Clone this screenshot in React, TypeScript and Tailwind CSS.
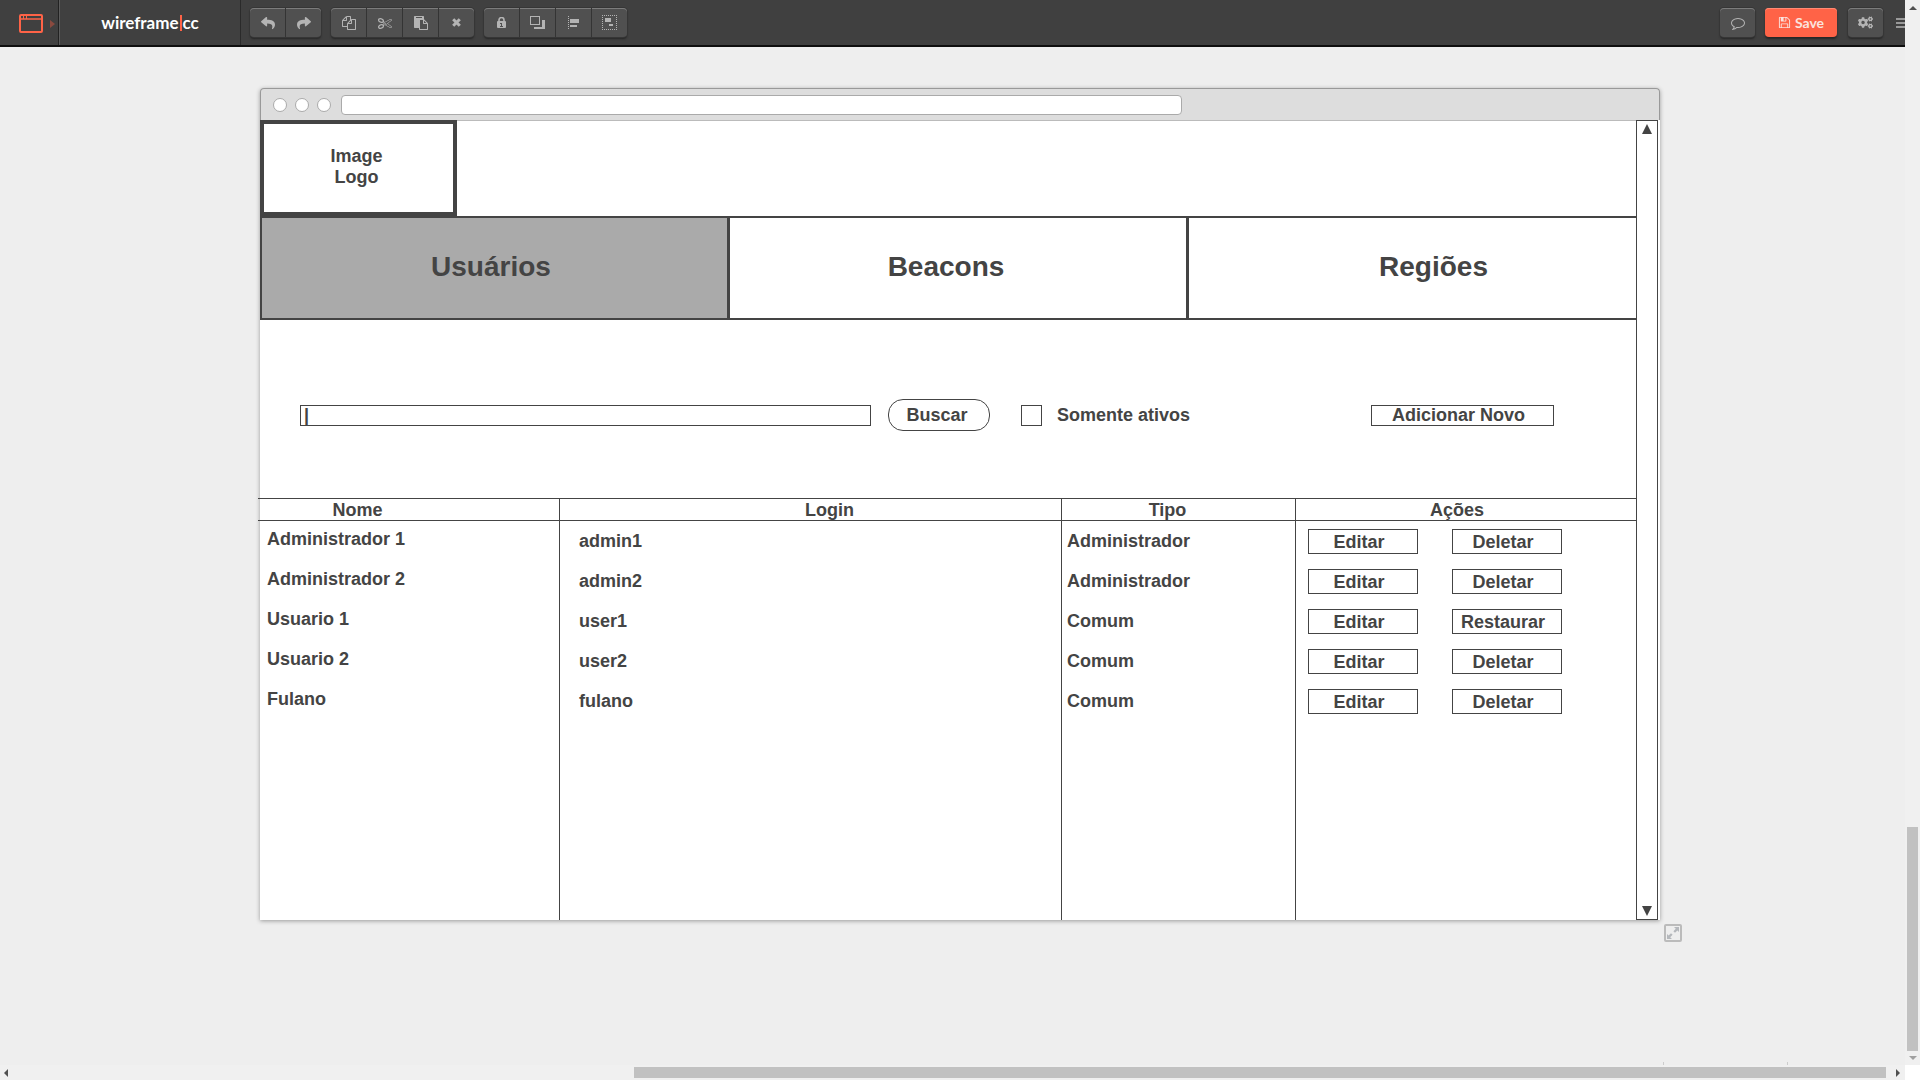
import type { ReactNode } from "react";
import { FaCogs, FaReply, FaShare } from "react-icons/fa";

const PATHS = {
  copy: "M1696 384q40 0 68 28t28 68v1216q0 40-28 68t-68 28h-960q-40 0-68-28t-28-68v-288h-544q-40 0-68-28t-28-68v-672q0-40 20-88t48-76l408-408q28-28 76-48t88-20h416q40 0 68 28t28 68v328q68-40 128-40h416zm-544 213l-299 299h299v-299zm-640-384l-299 299h299v-299zm196 647l316-316v-416h-384v416q0 40-28 68t-68 28h-416v640h512v-256q0-40 20-88t48-76zm956 804v-1152h-384v416q0 40-28 68t-68 28h-416v640h896z",
  cut: "M960 896q26 0 45 19t19 45-19 45-45 19-45-19-19-45 19-45 45-19zm300 64l507 398q28 20 25 56-5 35-35 51l-128 64q-13 7-29 7-17 0-31-8l-690-387-110 66q-8 4-12 5 14 49 10 97-7 77-56 147.500t-132 123.500q-132 84-277 84-136 0-222-78-90-84-79-207 7-76 56-147t131-124q132-84 278-84 83 0 151 31 9-13 22-22l122-73-122-73q-13-9-22-22-68 31-151 31-146 0-278-84-82-53-131-124t-56-147q-5-59 15.500-113t63.500-93q85-79 222-79 145 0 277 84 83 52 132 123t56 148q4 48-10 97 4 1 12 5l110 66 690-387q14-8 31-8 16 0 29 7l128 64q30 16 35 51 3 36-25 56zm-681-260q46-42 21-108t-106-117q-92-59-192-59-74 0-113 36-46 42-21 108t106 117q92 59 192 59 74 0 113-36zm-85 745q81-51 106-117t-21-108q-39-36-113-36-100 0-192 59-81 51-106 117t21 108q39 36 113 36 100 0 192-59zm178-613l96 58v-11q0-36 33-56l14-8-79-44-26 26q-3 3-10 11t-12 12q-2 2-4 3.500t-3 2.500zm224 224l96 32 736-576-128-64-768 431v113l-160 96 9 8q2 2 7 6 4 4 11 12t11 12l26 26zm704 416l128-64-520-408-177 138q-2 3-13 7z",
  paste: "M768 1664h896v-640h-416q-40 0-68-28t-28-68v-416h-384v1152zm256-1440v-64q0-13-9.500-22.500t-22.500-9.500h-704q-13 0-22.500 9.500t-9.500 22.500v64q0 13 9.500 22.500t22.500 9.500h704q13 0 22.500-9.500t9.500-22.500zm256 672h299l-299-299v299zm512 128v672q0 40-28 68t-68 28h-960q-40 0-68-28t-28-68v-160h-544q-40 0-68-28t-28-68v-1344q0-40 28-68t68-28h1088q40 0 68 28t28 68v328q21 13 36 28l408 408q28 28 48 76t20 88z",
  comment: "M896 384q-204 0-381.500 69.500t-282 187.500-104.500 255q0 112 71.500 213.500t201.500 175.500l87 50-27 96q-24 91-70 172 152-63 275-171l43-38 57 6q69 8 130 8 204 0 381.500-69.500t282-187.500 104.500-255-104.500-255-282-187.500-381.500-69.500zm896 512q0 174-120 321.500t-326 233-450 85.500q-70 0-145-8-198 175-460 242-49 14-114 22h-5q-15 0-27-10.500t-16-27.500v-1q-3-4-.500-12t2-10 4.500-9.500l6-9 7-8.500 8-9q7-8 31-34.500t34.500-38 31-39.500 32.500-51 27-59 26-76q-157-89-247.500-220t-90.500-281q0-174 120-321.500t326-233 450-85.500 450 85.500 326 233 120 321.500z",
  save: "M512 1536h768v-384h-768v384zm896 0h128v-896q0-14-10-38.500t-20-34.500l-281-281q-10-10-34-20t-39-10v416q0 40-28 68t-68 28h-576q-40 0-68-28t-28-68v-416h-128v1280h128v-416q0-40 28-68t68-28h832q40 0 68 28t28 68v416zm-384-928v-320q0-13-9.500-22.500t-22.500-9.500h-192q-13 0-22.500 9.500t-9.500 22.500v320q0 13 9.500 22.500t22.500 9.500h192q13 0 22.500-9.500t9.500-22.500zm640 32v928q0 40-28 68t-68 28h-1344q-40 0-68-28t-28-68v-1344q0-40 28-68t68-28h928q40 0 88 20t76 48l280 280q28 28 48 76t20 88z",
};

function Glyph({ d, size }: { d: string; size: number }) {
  return (
    <svg width={size} height={size} viewBox="0 0 1792 1792" fill="currentColor" aria-hidden="true">
      <path d={d} />
    </svg>
  );
}

const CrossIcon = () => (
  <svg width="9" height="9" viewBox="0 0 9 9" aria-hidden="true">
    <path d="M1.200 1.200l6.600 6.600M7.800 1.200L1.200 7.800" stroke="currentColor" strokeWidth="3" />
  </svg>
);

const LockIcon = () => (
  <svg width="9" height="11" viewBox="0 0 9 11" aria-hidden="true">
    <path d="M2 5V3a2.500 2.500 0 0 1 5 0v2" fill="none" stroke="currentColor" strokeWidth="1.600" />
    <rect y="4" width="9" height="7" rx="1" fill="currentColor" />
    <path d="M3 6h2v3h1v1H3V9h1V7H3z" fill="#505050" />
  </svg>
);

const LayersIcon = () => (
  <svg width="15" height="14" viewBox="0 0 15 14" shapeRendering="crispEdges" aria-hidden="true">
    <path d="M12 4h3v9H4v-2h8z" fill="currentColor" />
    <rect x="0.500" y="0.500" width="9" height="8" fill="none" stroke="currentColor" />
  </svg>
);

const AlignIcon = () => (
  <svg width="12" height="14" viewBox="0 0 12 14" shapeRendering="crispEdges" aria-hidden="true">
    <path d="M.500 0v14" stroke="currentColor" strokeDasharray="1 1" />
    <path d="M2 3h9v4H2zM2 9h7v2H2z" fill="currentColor" />
  </svg>
);

const GroupIcon = () => (
  <svg width="15" height="15" viewBox="0 0 15 15" shapeRendering="crispEdges" aria-hidden="true">
    <path d="M0 .500h15M0 14.500h15M.500 0v15M14.500 0v15" stroke="currentColor" strokeDasharray="1 1" />
    <path d="M3 3h6v4H3zM7 9h4v2H7z" fill="currentColor" />
  </svg>
);

type Tool = { label: string; icon: ReactNode };

const TOOL_GROUPS: Tool[][] = [
  [
    { label: "Undo", icon: <FaReply size={14} /> },
    { label: "Redo", icon: <FaShare size={14} /> },
  ],
  [
    { label: "Copy", icon: <Glyph d={PATHS.copy} size={14} /> },
    { label: "Cut", icon: <Glyph d={PATHS.cut} size={14} /> },
    { label: "Paste", icon: <Glyph d={PATHS.paste} size={14} /> },
    { label: "Delete", icon: <CrossIcon /> },
  ],
  [
    { label: "Lock", icon: <LockIcon /> },
    { label: "Arrange", icon: <LayersIcon /> },
    { label: "Align", icon: <AlignIcon /> },
    { label: "Group", icon: <GroupIcon /> },
  ],
];

const RAISED =
  "rounded bg-[#505050] text-[#b4b4b4] shadow-[inset_0_1px_0_#7c7c7c,0_0_0_1px_#363636,0_2px_2px_#262626]";

function ToolGroup({ tools }: { tools: Tool[] }) {
  return (
    <div className={`flex h-[29px] divide-x divide-[#343434] ${RAISED}`}>
      {tools.map((t) => (
        <button key={t.label} type="button" aria-label={t.label} className="flex w-9 items-center justify-center last:w-[35px]">
          {t.icon}
        </button>
      ))}
    </div>
  );
}

function Toolbar() {
  return (
    <header className="col-start-1 flex h-[47px] min-w-0 items-stretch overflow-hidden border-b-2 border-[#0f0f0f] bg-[#404040]">
      <button type="button" aria-label="Stencil" className="flex w-[60px] shrink-0 items-center gap-[7px] border-r border-[#5c5c5c] pl-[19px] pt-[2px] shadow-[inset_-1px_0_0_#222]">
        <svg width="24" height="19" viewBox="0 0 24 19" fill="none" stroke="#ff6347" aria-hidden="true">
          <rect x="1" y="1" width="22" height="17" rx="1" strokeWidth="2" />
          <path d="M1 5h22" strokeWidth="1.500" />
          <path d="M4.500 1v4M7.500 1v4" />
        </svg>
        <svg width="5" height="8" viewBox="0 0 5 8" fill="#8a4a3f" aria-hidden="true">
          <path d="M0 0l5 4-5 4z" />
        </svg>
      </button>
      <a href="#" className="flex w-[181px] shrink-0 items-center justify-center border-r border-[#2a2a2a] font-['Lato',sans-serif] text-[17px] font-bold text-white">
        wireframe<span className="mx-px h-4 w-[2px] bg-[#ff6347]" />cc
      </a>
      <div className="flex shrink-0 gap-[10px] pl-[9px] pt-2">
        {TOOL_GROUPS.map((g) => (
          <ToolGroup key={g[0].label} tools={g} />
        ))}
      </div>
      <div className="ml-auto flex shrink-0 gap-[10px] pt-2">
        <button type="button" aria-label="Comments" className={`flex h-[29px] w-[35px] items-center justify-center ${RAISED}`}>
          <Glyph d={PATHS.comment} size={14} />
        </button>
        <button type="button" className="mr-px flex h-[29px] w-[72px] items-center justify-center gap-1 rounded bg-[#ff6347] font-['Lato',sans-serif] text-sm font-bold text-[#fbe3de] shadow-[inset_0_1px_0_#ff8a74,0_2px_2px_#262626]">
          <Glyph d={PATHS.save} size={13} />
          Save
        </button>
        <button type="button" aria-label="Settings" className={`flex h-[29px] w-[35px] items-center justify-center ${RAISED}`}>
          <FaCogs size={15} />
        </button>
        <button type="button" aria-label="Menu" className="ml-[3px] flex h-[29px] w-[9px] flex-col justify-center gap-[2px]">
          <span className="h-[2px] bg-[#999]" />
          <span className="h-[2px] bg-[#999]" />
          <span className="h-[2px] bg-[#999]" />
        </button>
      </div>
    </header>
  );
}

const TABS = [
  { label: "Usuários", style: "w-[470px] border-x-[3px] border-l-2 bg-[#aaa] pr-[7px]" },
  { label: "Beacons", style: "flex-1 border-r-[3px] pr-6" },
  { label: "Regiões", style: "w-[447px] pl-[42px]" },
];

const ROWS = [
  { name: "Administrador 1", login: "admin1", type: "Administrador", action: "Deletar" },
  { name: "Administrador 2", login: "admin2", type: "Administrador", action: "Deletar" },
  { name: "Usuario 1", login: "user1", type: "Comum", action: "Restaurar" },
  { name: "Usuario 2", login: "user2", type: "Comum", action: "Deletar" },
  { name: "Fulano", login: "fulano", type: "Comum", action: "Deletar" },
];

function RowButton({ children }: { children: ReactNode }) {
  return (
    <button type="button" className="h-[25px] w-[110px] border border-[#444] pr-2 leading-[25px]">
      {children}
    </button>
  );
}

function UsersTable() {
  return (
    <table className="-ml-[2px] w-[calc(100%+2px)] table-fixed border-separate border-spacing-0 text-left">
      <colgroup>
        <col className="w-[302px]" />
        <col />
        <col className="w-[234px]" />
        <col className="w-[340px]" />
      </colgroup>
      <thead>
        <tr className="h-[23px] text-center leading-[19px] [&>th]:border-y [&>th]:border-[#444] [&>th]:pb-0 [&>th]:pt-[2px]">
          <th className="border-r pr-[102px]">Nome</th>
          <th className="border-r pl-[38px]">Login</th>
          <th className="border-r pr-[22px]">Tipo</th>
          <th className="pr-[18px]">Ações</th>
        </tr>
      </thead>
      <tbody className="[&_td]:border-[#444] [&_td]:align-top">
        {ROWS.map((r) => (
          <tr key={r.name} className="h-10 leading-[21px]">
            <td className="border-r pl-[9px] pt-2">{r.name}</td>
            <td className="border-r pl-[19px] pt-[10px]">{r.login}</td>
            <td className="border-r pl-[5px] pt-[10px]">{r.type}</td>
            <td className="pl-3 pt-2">
              <div className="flex gap-[34px]">
                <RowButton>Editar</RowButton>
                <RowButton>{r.action}</RowButton>
              </div>
            </td>
          </tr>
        ))}
        <tr className="h-[199px]" aria-hidden="true">
          <td className="border-r" />
          <td className="border-r" />
          <td className="border-r" />
          <td />
        </tr>
      </tbody>
    </table>
  );
}

function BrowserWindow() {
  return (
    <section className="rounded-t-[4px] shadow-[0_1px_4px_#999]">
      <div className="flex h-8 items-center gap-[8px] rounded-t-[4px] border border-b-0 border-[#999] bg-[#ddd] pl-3">
        <span className="size-[14px] rounded-full border border-[#aaa] bg-white" />
        <span className="size-[14px] rounded-full border border-[#aaa] bg-white" />
        <span className="size-[14px] rounded-full border border-[#aaa] bg-white" />
        <input aria-label="Address" className="ml-[2px] h-5 w-[60.700%] rounded-[4px] border border-[#aaa] bg-white px-2 text-sm outline-none" />
      </div>
      <div className="flex bg-white font-['Liberation_Sans',Arial,sans-serif] text-lg font-bold text-[#444]">
        <div className="min-w-0 flex-1">
          <div className="flex border-t border-[#bbb]">
            <div className="-mt-px flex h-24 w-[197px] items-center justify-center border-4 border-[#444] pb-[2px] pr-1 text-center leading-[21px]">
              Image
              <br />
              Logo
            </div>
          </div>
          <nav className="flex h-[104px] border-y-2 border-[#444] text-[28px]">
            {TABS.map((t) => (
              <button key={t.label} type="button" className={`flex items-center justify-center border-[#444] pb-[2px] ${t.style}`}>
                {t.label}
              </button>
            ))}
          </nav>
          <form className="flex items-center pb-[67px] pl-10 pr-[82px] pt-[79px]" onSubmit={(e) => e.preventDefault()}>
            <input aria-label="Pesquisar" defaultValue="|" className="h-[21px] min-w-0 flex-1 border border-[#444] bg-white px-[3px] text-lg leading-[19px] outline-none" />
            <button type="submit" className="ml-[17px] h-8 w-[102px] rounded-[15px] border border-[#444] pr-1 leading-[29px]">
              Buscar
            </button>
            <label className="ml-[31px] flex items-center gap-[15px] leading-[21px]">
              <input type="checkbox" className="size-[21px] appearance-none border border-[#444] bg-white checked:bg-[#444]" />
              Somente ativos
            </label>
            <button type="button" className="ml-[181px] h-[21px] w-[183px] border border-[#444] pr-2 leading-[19px]">
              Adicionar Novo
            </button>
          </form>
          <UsersTable />
        </div>
        <div className="mr-[2px] flex w-[22px] flex-col items-center justify-between border border-[#444] py-[3px]">
          <svg width="10" height="10" viewBox="0 0 10 10" fill="#444" aria-hidden="true">
            <path d="M5 0l5 10H0z" />
          </svg>
          <svg width="10" height="10" viewBox="0 0 10 10" fill="#444" aria-hidden="true">
            <path d="M0 0h10L5 10z" />
          </svg>
        </div>
      </div>
    </section>
  );
}

function Arrow({ d, fill }: { d: string; fill: string }) {
  return (
    <svg width="14" height="14" viewBox="0 0 14 14" fill={fill} className="shrink-0" aria-hidden="true">
      <path d={d} />
    </svg>
  );
}

export default function App() {
  return (
    <div className="grid h-screen grid-cols-[minmax(0,1fr)_15px] grid-rows-[minmax(0,1fr)_15px] bg-white">
      <div className="flex min-h-0 flex-col bg-[#eee]">
        <Toolbar />
        <main className="flex min-h-0 flex-1 flex-col overflow-hidden pl-[260px] pt-[41px]">
          <div className="pr-[245px]">
            <BrowserWindow />
          </div>
          <div className="flex justify-end pr-[223px] pt-1">
            <button type="button" aria-label="Resize" className="flex size-[18px] items-center justify-center rounded-[2px] border-2 border-[#bbb]">
              <svg width="12" height="12" viewBox="0 0 12 12" fill="#b5b8bc" aria-hidden="true">
                <path d="M7 0h5v5l-1.600-1.600-2.400 2.400-1.600-1.600 2.400-2.400zM0 7l1.600 1.600L4 6.200l1.600 1.600-2.400 2.400L5 12H0z" />
              </svg>
            </button>
          </div>
          <div className="mt-auto flex justify-end gap-[123px] pr-[117px]">
            <span className="h-[3px] w-px bg-[#ccc]" />
            <span className="h-[3px] w-px bg-[#ccc]" />
          </div>
        </main>
      </div>
      <div className="flex flex-col items-center bg-[#f0f0f0]">
        <Arrow d="M7 6l4 4H3z" fill="#505050" />
        <span className="grow-[813]" />
        <span className="w-[11px] grow-[224] bg-[#c1c1c1]" />
        <Arrow d="M3 5h8l-4 4z" fill="#a0a0a0" />
      </div>
      <div className="flex items-center bg-[#f0f0f0]">
        <Arrow d="M8 3v8L4 7z" fill="#505050" />
        <span className="grow-[620]" />
        <span className="mr-[5px] h-[11px] grow-[1252] bg-[#c1c1c1]" />
        <Arrow d="M5 3v8l4-4z" fill="#505050" />
      </div>
    </div>
  );
}
